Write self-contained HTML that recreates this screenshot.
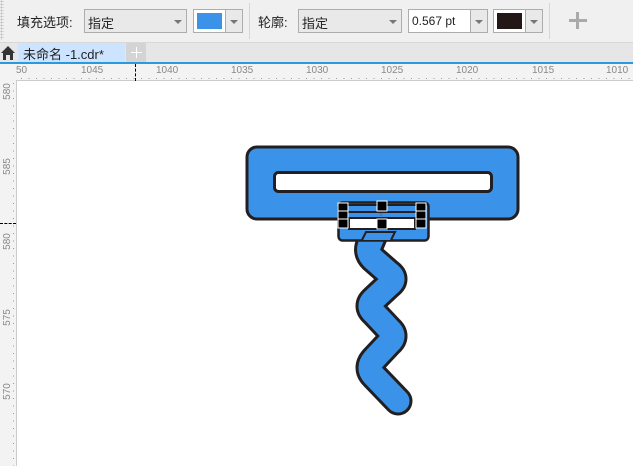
<!DOCTYPE html>
<html><head><meta charset="utf-8"><style>
*{margin:0;padding:0;box-sizing:border-box}
body{width:633px;height:466px;overflow:hidden;background:#f0f0f0;font-family:"Liberation Sans","Noto Sans CJK SC",sans-serif;position:relative}
.a{position:absolute}
.t{font-size:13px;color:#222}
.dd{position:absolute;border:1px solid #adadad;background:#e9e9e9;height:24px}
.arr{position:absolute;width:0;height:0;border-left:4px solid transparent;border-right:4px solid transparent;border-top:4px solid #777}
.rl{font-size:10px;color:#888;position:absolute;top:65px}
.vl{font-size:10px;color:#888;position:absolute;left:-1px;transform:rotate(-90deg)}
</style></head><body>
<div class="a" style="left:0;top:0;width:4px;height:40px;background-image:radial-gradient(#bbb 1px,transparent 1px);background-size:3px 3px"></div>
<div class="a t" style="left:17px;top:12px">填充选项:</div>
<div class="dd" style="left:84px;top:9px;width:103px"><span class="t a" style="left:3px;top:3px">指定</span><div class="arr" style="left:89px;top:10px"></div></div>
<div class="dd" style="left:193px;top:9px;width:50px;background:#fff"><div class="a" style="left:3px;top:3px;width:25px;height:16px;background:#3a93e8"></div><div class="a" style="left:31px;top:0;width:1px;height:22px;background:#adadad"></div><div class="a" style="left:32px;top:0;width:16px;height:22px;background:#e9e9e9"></div><div class="arr" style="left:36px;top:10px"></div></div>
<div class="a" style="left:249px;top:3px;width:1px;height:36px;background:#d6d6d6"></div>
<div class="a t" style="left:258px;top:12px">轮廓:</div>
<div class="dd" style="left:298px;top:9px;width:104px"><span class="t a" style="left:3px;top:3px">指定</span><div class="arr" style="left:90px;top:10px"></div></div>
<div class="dd" style="left:408px;top:9px;width:80px;background:#fff"><span class="a" style="left:3px;top:4px;font-size:12px;color:#222">0.567 pt</span><div class="a" style="left:61px;top:0;width:1px;height:22px;background:#adadad"></div><div class="a" style="left:62px;top:0;width:16px;height:22px;background:#e9e9e9"></div><div class="arr" style="left:66px;top:10px"></div></div>
<div class="dd" style="left:493px;top:9px;width:50px;background:#fff"><div class="a" style="left:3px;top:3px;width:25px;height:16px;background:#231815"></div><div class="a" style="left:31px;top:0;width:1px;height:22px;background:#adadad"></div><div class="a" style="left:32px;top:0;width:16px;height:22px;background:#e9e9e9"></div><div class="arr" style="left:36px;top:10px"></div></div>
<div class="a" style="left:549px;top:3px;width:1px;height:36px;background:#d6d6d6"></div>
<div class="a" style="left:569px;top:19px;width:18px;height:3px;background:#aaa"></div>
<div class="a" style="left:576px;top:12px;width:3px;height:17px;background:#aaa"></div>
<div class="a" style="left:0;top:42px;width:633px;height:21px;background:#e6e6e6;border-top:1px solid #d8d8d8"></div>
<svg class="a" style="left:0;top:44px" width="16" height="17"><path d="M1 9 L8 2 L15 9 L13 9 L13 16 L10 16 L10 11 L6 11 L6 16 L3 16 L3 9Z" fill="#333"/></svg>
<div class="a" style="left:18px;top:43px;width:107px;height:19px;background:#cce4ff"><span class="a t" style="left:5px;top:1px">未命名 -1.cdr*</span></div>
<div class="a" style="left:126px;top:43px;width:20px;height:19px;background:#d4d4d4"></div>
<div class="a" style="left:131px;top:52px;width:11px;height:1px;background:#fff"></div>
<div class="a" style="left:136px;top:47px;width:1px;height:11px;background:#fff"></div>
<div class="a" style="left:0;top:62px;width:633px;height:2px;background:#2a9ae0"></div>
<div class="a" style="left:0;top:64px;width:633px;height:17px;background:#f3f3f3"></div>
<div class="a" style="left:0;top:64px;width:16px;height:402px;background:#f3f3f3"></div>
<div class="a" style="left:16px;top:80px;width:617px;height:1px;background:#ccc"></div>
<div class="a" style="left:16px;top:81px;width:1px;height:385px;background:#ccc"></div>
<div class="a" style="left:17px;top:78px;width:616px;height:1px;background-image:linear-gradient(90deg,#999 1px,transparent 1px);background-size:7.5px 1px;background-position:4px 0"></div>
<div class="a" style="left:13px;top:81px;width:1px;height:385px;background-image:linear-gradient(#999 1px,transparent 1px);background-size:1px 7.5px;background-position:0 2px"></div>
<span class="rl" style="left:16px">50</span><span class="rl" style="left:81px">1045</span><span class="rl" style="left:156px">1040</span><span class="rl" style="left:231px">1035</span><span class="rl" style="left:306px">1030</span><span class="rl" style="left:381px">1025</span><span class="rl" style="left:456px">1020</span><span class="rl" style="left:532px">1015</span><span class="rl" style="left:606px">1010</span>
<div class="a" style="left:135px;top:64px;width:1px;height:17px;border-left:1px dashed #000"></div>
<div class="a" style="left:0;top:223px;width:16px;height:1px;border-top:1px dashed #000"></div>
<span class="vl" style="top:86px">580</span><span class="vl" style="top:161px">585</span><span class="vl" style="top:236px">580</span><span class="vl" style="top:312px">575</span><span class="vl" style="top:386px">570</span>
<div class="a" style="left:17px;top:81px;width:616px;height:385px;background:#fff"></div>
<svg class="a" style="left:0;top:0" width="633" height="466">
<defs><path id="w" d="M375 232 L370 244 Q366 252 373 259 L389 273 Q397 279 389 285 L374 299 Q366 306 374 313 L389 329 Q397 336 389 343 L374 359 Q366 368 374 376 L398 401"/></defs>
<use href="#w" fill="none" stroke="#231f20" stroke-width="29" stroke-linejoin="round" stroke-linecap="round"/>
<use href="#w" fill="none" stroke="#3a93e8" stroke-width="23" stroke-linejoin="round" stroke-linecap="round"/>
<rect x="247" y="147" width="271" height="72" rx="10" fill="#3a93e8" stroke="#231f20" stroke-width="3"/>
<rect x="274.5" y="172.5" width="217" height="19" rx="4" fill="#fff" stroke="#231f20" stroke-width="3"/>
<rect x="338.5" y="202.5" width="90" height="38" rx="4" fill="#3a93e8" stroke="#231f20" stroke-width="2.5"/>
<path d="M362 240 L366 232 L395 232 L391 240" fill="#3a93e8" stroke="#231f20" stroke-width="2"/>
<rect x="349" y="218" width="66" height="11" fill="#fff" stroke="#231f20" stroke-width="2"/>
<line x1="347" y1="205" x2="418" y2="205" stroke="#231f20" stroke-width="2"/>
<line x1="347" y1="212" x2="418" y2="212" stroke="#231f20" stroke-width="2"/>
<g fill="#000" stroke="#fff" stroke-width="1">
<rect x="338" y="203" width="10" height="9"/><rect x="338" y="211" width="10" height="9"/><rect x="338" y="219" width="10" height="9"/>
<rect x="416" y="203" width="10" height="9"/><rect x="416" y="211" width="10" height="9"/><rect x="416" y="219" width="10" height="9"/>
<rect x="377" y="201" width="10" height="10"/><rect x="377" y="219" width="10" height="10"/>
</g>
<text x="379" y="217" font-size="7" fill="#666" font-family="Liberation Sans">×</text>
</svg>
</body></html>
